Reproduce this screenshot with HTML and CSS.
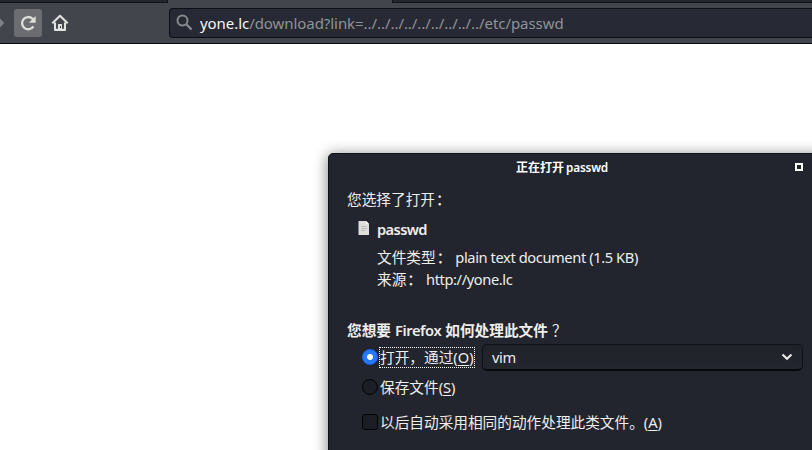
FILE: index.html
```html
<!DOCTYPE html>
<html lang="zh-CN">
<head>
<meta charset="utf-8">
<title>passwd</title>
<link rel="stylesheet" href="styles.css">
</head>
<body>
<header class="chrome">
  <div class="tabs"><div class="tab-left"></div><div class="tab-active"></div><div class="tab-right"></div></div>
  <nav class="toolbar">
    <svg class="forward" width="6" height="18" viewBox="0 0 6 18"><path d="M0 4.5l4.3 4.5L0 13.500z" fill="#808185"/></svg>
    <div class="reload"><svg width="28" height="28" viewBox="0 0 28 28"><path d="M19.400 17.3a6.100 6.100 0 1 1-1-7.600l1.300 1.300" fill="none" stroke="#deded9" stroke-width="2.3"/><path d="M21.700 7v6.800h-6.800z" fill="#deded9"/></svg></div>
    <svg class="home" width="18" height="18" viewBox="0 0 18 18"><path d="M1.300 9.300L9 1.800l7.700 7.500M4 8.400v7.500h10V8.400" fill="none" stroke="#e1e1df" stroke-width="2.1" stroke-linejoin="round"/><path d="M7 16v-6h4v6z" fill="#e1e1df"/><path d="M9 12h1v2H9z" fill="#42454c"/></svg>
    <div class="address">
      <svg width="18" height="18" viewBox="0 0 18 18"><circle cx="6.500" cy="6.500" r="5" fill="none" stroke="#88898d" stroke-width="2"/><path d="M10.300 10.300l5.300 5.300" stroke="#88898d" stroke-width="2.2"/></svg>
      <span class="url"><b>yone.lc</b>/download?link=../../../../../../../../../etc/passwd</span>
    </div>
  </nav>
</header>
<main class="page">
  <section class="dialog">
    <div class="titlebar"><h1>正在打开<span class="name">passwd</span></h1><i class="maximize"></i></div>
    <p class="intro">您选择了打开<span class="colon">：</span></p>
    <div class="file">
      <svg width="12" height="14" viewBox="0 0 12 14"><path d="M.5 0h7.700L11 3v11H.5z" fill="#dededc"/><path d="M8 0l3 3H8z" fill="#fff"/><path d="M3 5.500h5.500M3 7.500h6M3 9.500h4" stroke="#bcbcbc"/></svg>
      <strong>passwd</strong>
    </div>
    <div class="detail"><span>文件类型<span class="colon">：</span></span><span class="latin">plain text document (1.5 KB)</span></div>
    <div class="detail"><span>来源<span class="colon">：</span></span><span class="latin">http://yone.lc</span></div>
    <h2><span>您想要</span><span class="firefox">Firefox</span><span>如何处理此文件</span><span class="question">？</span></h2>
    <div class="choice open">
      <i class="radio checked"></i>
      <span class="focus">打开，通过<span class="key">(<u>O</u>)</span></span>
      <div class="select"><span class="value">vim</span><svg width="12" height="8" viewBox="0 0 12 8"><path d="M1.500 1.500L6 5.700l4.500-4.200" fill="none" stroke="#e7e7e5" stroke-width="2.2"/></svg></div>
    </div>
    <div class="choice save"><i class="radio"></i><span>保存文件<span class="key">(<u>S</u>)</span></span></div>
    <div class="choice always"><i class="checkbox"></i><span>以后自动采用相同的动作处理此类文件。<span class="key">(<u>A</u>)</span></span></div>
  </section>
</main>
</body>
</html>
```
FILE: styles.css
```css
* { box-sizing: border-box; }
body {
  margin: 0;
  width: 812px;
  height: 450px;
  overflow: hidden;
  display: flex;
  flex-direction: column;
  background: #fff;
  color: #eeeeec;
  font: 14.67px/22px "Noto Sans", "Noto Sans CJK SC", sans-serif;
}
svg { display: block; flex: none; }
i { display: block; flex: none; }
p, h1, h2 { margin: 0; }
.chrome { height: 44px; flex: none; background: #42454c; border-bottom: 1px solid #0b0911; }
.tabs { display: flex; height: 3px; }
.tab-left { width: 168px; background: #23252e; border-bottom: 1px solid #12131a; border-right: 1px solid #12131a; }
.tab-active { width: 224px; }
.tab-right { flex: 1; background: #23252e; border-bottom: 1px solid #12131a; border-left: 1px solid #12131a; }
.toolbar { display: flex; align-items: center; height: 40px; }
.forward { margin-right: 8px; }
.reload { width: 28px; height: 28px; background: #6c6d71; border-radius: 3px; }
.home { margin-left: 9px; }
.address {
  display: flex;
  align-items: center;
  flex: 1;
  height: 30px;
  margin-left: 100px;
  padding-left: 6px;
  background: #272934;
  border: 1px solid #0d0e14;
  border-right: 0;
  border-radius: 4px 0 0 4px;
}
.url { margin-left: 6px; color: #919296; white-space: nowrap; font-size: 15px; letter-spacing: -.06px; }
.url b { font-weight: 400; color: #f6f6f6; }
.page { flex: 1; padding: 109px 0 0 328px; overflow: hidden; }
.dialog {
  height: 400px;
  width: 520px;
  border: 1px solid #11131b;
  border-radius: 5px 0 0 0;
  background: #23252e;
  box-shadow: 0 2px 14px 1px rgba(0, 0, 0, .45);
  padding-left: 18px;
}
.titlebar { display: flex; align-items: center; height: 26px; }
.titlebar h1 { width: 279px; margin-left: 169px; font-size: 12px; line-height: 20px; font-weight: 700; color: #fff; }
.name { margin-left: 2px; font-size: 11.8px; font-weight: 600; letter-spacing: -.2px; }
.maximize { width: 8px; height: 8px; border: 2px solid #fff; }
.intro { margin-top: 8px; }
.colon { margin-left: 1px; margin-right: -1px; font-weight: 500; }
.file { display: flex; align-items: center; height: 22px; margin: 8px 0 6px 11px; }
.file svg { margin-top: -3px; }
.file strong { margin-left: 7px; font-weight: 600; letter-spacing: -.6px; }
.detail { display: flex; margin-left: 30px; white-space: nowrap; }
.latin { margin-left: 5px; letter-spacing: -.4px; }
h2 { display: flex; margin-top: 29px; font-size: 14.67px; line-height: 22px; font-weight: 600; }
.firefox { margin: 0 4px; letter-spacing: -.4px; }
.question { margin-left: 4px; font-weight: 400; }
.choice { display: flex; align-items: center; margin-left: 15px; white-space: nowrap; }
.open { height: 30px; margin-top: 1px; }
.save { height: 22px; margin-top: 4px; }
.always { height: 22px; margin-top: 13px; }
.radio, .checkbox { width: 16px; height: 16px; margin-right: 2px; background: #1c1e26; border: 1px solid #030405; border-radius: 50%; }
.checkbox { border-radius: 3px; }
.checked { background: radial-gradient(circle, #fff 0 2.5px, #2777ff 3.5px); border-color: #1864ee; }
.focus { height: 21px; width: 96px; line-height: 19px; margin-left: -1px; border: 1px dotted #fff; }
.select {
  display: flex;
  align-items: center;
  justify-content: space-between;
  width: 321px;
  height: 27px;
  margin-left: 7px;
  padding: 0 9px;
  background: linear-gradient(#20222a, #24262f);
  border: 1px solid #101219;
  border-bottom: 2px solid #090a0e;
  border-radius: 5px;
}
.value { letter-spacing: -.4px; }
u { text-underline-offset: 2px; text-decoration-thickness: 1px; }
```
